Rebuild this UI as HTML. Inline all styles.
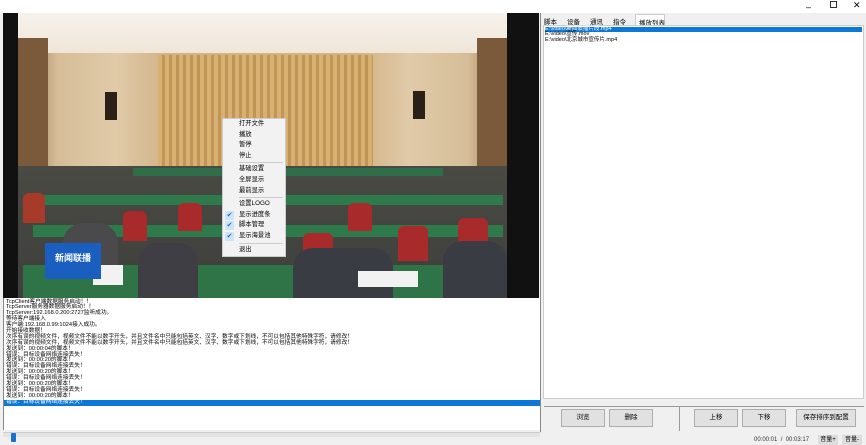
<!DOCTYPE html>
<html><head><meta charset="utf-8"><style>
*{margin:0;padding:0;box-sizing:border-box}
body{width:866px;height:445px;background:#f0f0f0;position:relative;overflow:hidden;font-family:"Liberation Sans","Noto Sans CJK SC",sans-serif;font-size:7px;color:#000}
.abs{position:absolute}
#video{left:3px;top:13px;width:536px;height:285px;background:#111;overflow:hidden}
#log{left:3px;top:298px;width:537px;height:132px;background:#fff;border-left:1px solid #888;padding-top:1.5px}
#log div{height:5.9px;line-height:5.9px;font-size:5.7px;white-space:nowrap;padding-left:2px}
.menu{left:222px;top:118px;width:64px;height:139px;background:#f2f2f2;border:1px solid #ccc;font-size:6.3px}
.menu div{height:10.6px;line-height:10.6px;padding-left:16px;position:relative}
.menu hr{border:0;border-top:1px solid #ccc;margin:1px 2px 1px 16px}
.chk{position:absolute;left:2px;top:1px;width:9px;height:9px;background:#cde4f7;color:#1d6ec9;font-size:7px;line-height:9px;text-align:center}
.btn{position:absolute;top:409px;height:18px;background:#e1e1e1;border:1px solid #adadad;font-size:6.5px;text-align:center;line-height:16px}
.p{position:absolute;border-radius:6px 6px 0 0}
</style></head><body>
<div class="abs" style="left:0;top:0;width:866px;height:13px;background:#fff"></div>
<div class="abs" style="left:806px;top:2px;font-size:9px">–</div>
<div class="abs" style="left:830px;top:1px;width:7px;height:7px;border:1px solid #333"></div>
<div class="abs" style="left:853px;top:0;font-size:9px">✕</div>

<div id="video" class="abs">
 <div class="abs" style="left:15px;top:0;width:489px;height:285px;background:linear-gradient(90deg,#8a6a48 0%,#d6bd98 8%,#e0caa8 20%,#d2b488 30%,#d8b47a 50%,#d2b488 70%,#e0caa8 80%,#d6bd98 92%,#8a6a48 100%)"></div>
 <div class="abs" style="left:15px;top:0;width:489px;height:40px;background:linear-gradient(180deg,#f6f2ec,#efe6d8)"></div>
 <div class="abs" style="left:15px;top:25px;width:30px;height:140px;background:#7a5a3a"></div>
 <div class="abs" style="left:474px;top:25px;width:30px;height:140px;background:#7a5a3a"></div>
 <div class="abs" style="left:155px;top:42px;width:215px;height:125px;background:repeating-linear-gradient(90deg,#d8b070 0 4px,#c09558 4px 7px)"></div>
 <div class="abs" style="left:102px;top:79px;width:12px;height:28px;background:#2a2018"></div>
 <div class="abs" style="left:410px;top:78px;width:12px;height:28px;background:#2a2018"></div>
 <div class="abs" style="left:15px;top:153px;width:489px;height:132px;background:linear-gradient(180deg,#4a4a44 0%,#3e3e3c 100%)"></div>
 <div class="abs" style="left:130px;top:155px;width:310px;height:8px;background:#2f6e48"></div>
 <div class="abs" style="left:30px;top:182px;width:470px;height:10px;background:#2f7a4a"></div>
 <div class="abs" style="left:30px;top:212px;width:470px;height:12px;background:#2f7a4a"></div>
 <div class="abs" style="left:20px;top:252px;width:484px;height:33px;background:#2e7446"></div>
 <div class="p" style="left:120px;top:198px;width:24px;height:30px;background:#a82a2a"></div>
 <div class="p" style="left:175px;top:190px;width:24px;height:28px;background:#a82a2a"></div>
 <div class="p" style="left:345px;top:190px;width:24px;height:28px;background:#a82a2a"></div>
 <div class="p" style="left:395px;top:213px;width:30px;height:35px;background:#a82a2a"></div>
 <div class="p" style="left:300px;top:220px;width:30px;height:35px;background:#a82a2a"></div>
 <div class="p" style="left:455px;top:205px;width:30px;height:35px;background:#a82a2a"></div>
 <div class="p" style="left:20px;top:180px;width:22px;height:30px;background:#a83a2a"></div>
 <div class="p" style="left:60px;top:210px;width:55px;height:50px;background:#4a4a4c;border-radius:20px 20px 0 0"></div>
 <div class="p" style="left:135px;top:230px;width:60px;height:55px;background:#3e3e44;border-radius:20px 20px 0 0"></div>
 <div class="p" style="left:290px;top:235px;width:100px;height:50px;background:#3a3c44;border-radius:20px 20px 0 0"></div>
 <div class="p" style="left:440px;top:228px;width:64px;height:57px;background:#3a3c44;border-radius:20px 20px 0 0"></div>
 <div class="abs" style="left:355px;top:258px;width:60px;height:16px;background:#f2f2f2"></div>
 <div class="abs" style="left:90px;top:252px;width:30px;height:20px;background:#f2f2f2"></div>
 <div class="abs" style="left:42px;top:230px;width:56px;height:36px;background:#1a5fc0;color:#fff;font-size:9px;font-weight:bold;text-align:center;line-height:30px">新闻联播</div>
</div>

<div class="menu abs">
 <div>打开文件</div><div>播放</div><div>暂停</div><div>停止</div><hr>
 <div>基础设置</div><div>全屏显示</div><div>最前显示</div><hr>
 <div>设置LOGO</div><div><span class="chk">✔</span>显示进度条</div><div><span class="chk">✔</span>脚本管理</div><div><span class="chk">✔</span>显示海景池</div><hr>
 <div>退出</div>
</div>

<div id="log" class="abs">
<div>TcpClient客户端数据服务启动！！</div>
<div>TcpServer服务器数据服务启动！！</div>
<div>TcpServer:192.168.0.200:2727监听成功。</div>
<div>等待客户端接入</div>
<div>客户端:192.168.0.99:1024接入成功。</div>
<div>开始接收数据！</div>
<div>次序有误的视频文件，视频文件不能以数字开头，并且文件名中只能包括英文、汉字、数字或下划线，不可以包括其他特殊字符，请修改！</div>
<div>次序有误的视频文件，视频文件不能以数字开头，并且文件名中只能包括英文、汉字、数字或下划线，不可以包括其他特殊字符，请修改！</div>
<div>发送到：00:00:04的脚本！</div>
<div>错误：目标设备网络连接丢失！</div>
<div>发送到：00:00:20的脚本！</div>
<div>错误：目标设备网络连接丢失！</div>
<div>发送到：00:00:20的脚本！</div>
<div>错误：目标设备网络连接丢失！</div>
<div>发送到：00:00:20的脚本！</div>
<div>错误：目标设备网络连接丢失！</div>
<div>发送到：00:00:20的脚本！</div>
<div style="background:#0a78d7;color:#fff">错误：目标设备网络连接丢失！</div>
</div>

<div class="abs" style="left:3px;top:432px;width:537px;height:5px;background:#e4e4e4;border-top:1px solid #ccc"></div>
<div class="abs" style="left:11px;top:433px;width:5px;height:9px;background:#1a6fd0;border-radius:1px"></div>

<div class="abs" style="left:540px;top:13px;width:326px;height:419px;background:#f0f0f0;border-left:1px solid #888"></div>
<div class="abs" style="left:544px;top:16px;font-size:6.5px">脚本</div>
<div class="abs" style="left:567px;top:16px;font-size:6.5px">设备</div>
<div class="abs" style="left:590px;top:16px;font-size:6.5px">通讯</div>
<div class="abs" style="left:613px;top:16px;font-size:6.5px">指令</div>
<div class="abs" style="left:635px;top:14px;width:30px;height:11px;background:#fff;border:1px solid #ccc;border-bottom:0;font-size:6.5px;padding:2px 0 0 3px;white-space:nowrap">播放列表</div>
<div class="abs" style="left:543px;top:25px;width:321px;height:374px;background:#fff;border:1px solid #ccc"></div>
<div class="abs" style="left:545px;top:27px;width:317px;height:5px;background:#0a78d7;color:#fff;font-size:5.5px;line-height:5px">E:\video\新闻联播片段.mp4</div>
<div class="abs" style="left:545px;top:32px;font-size:5.5px;line-height:5px">E:\video\宣传.mov</div>
<div class="abs" style="left:545px;top:37px;font-size:5.5px;line-height:6px">E:\video\北京城市宣传片.mp4</div>
<div class="abs" style="left:544px;top:406px;width:320px;height:1px;background:#999"></div>
<div class="abs" style="left:679px;top:407px;width:1px;height:24px;background:#999"></div>
<div class="btn" style="left:561px;width:44px">浏览</div>
<div class="btn" style="left:609px;width:44px">删除</div>
<div class="btn" style="left:694px;width:44px">上移</div>
<div class="btn" style="left:742px;width:44px">下移</div>
<div class="btn" style="left:796px;width:60px">保存排序到配置</div>
<div class="abs" style="left:754px;top:437px;font-size:6px;color:#333">00:00:01 &nbsp;/ &nbsp;00:03:17</div>
<div class="abs" style="left:818px;top:435px;width:20px;height:10px;background:#ddd;font-size:6px;text-align:center;line-height:10px">音量+</div>
<div class="abs" style="left:842px;top:435px;width:20px;height:10px;background:#ddd;font-size:6px;text-align:center;line-height:10px">音量-</div>
</body></html>
